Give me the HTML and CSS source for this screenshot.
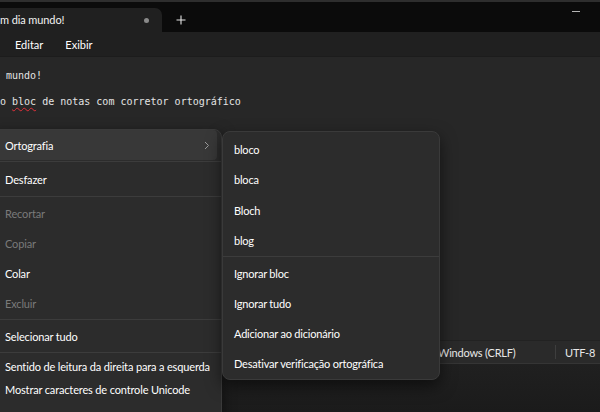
FILE: index.html
```html
<!DOCTYPE html>
<html lang="pt-BR">
<head>
<meta charset="utf-8">
<title>Bloco de notas</title>
<link rel="stylesheet" href="styles.css">
</head>
<body>
<div class="window">
  <div class="topstrip"></div>
  <div class="tabbar">
    <div class="tab">
      <span class="tab-title">m dia mundo!</span>
      <span class="dot"></span>
    </div>
    <div class="newtab">
      <svg width="10" height="10" viewBox="0 0 10 10"><path d="M5 0.5V9.5M0.5 5H9.5" stroke="#e6e6e6" stroke-width="1.1" fill="none"/></svg>
    </div>
    <div class="spacer"></div>
    <div class="minimize"></div>
  </div>
  <div class="menubar">
    <span class="menu-item">Editar</span>
    <span class="menu-item">Exibir</span>
  </div>
  <div class="editor">
    <div class="line"> mundo!</div>
    <div class="line">o <span class="misspelled">bloc</span> de notas com corretor ortográfico</div>
  </div>
  <div class="statusbar">
    <span class="status-item status-eol">Windows (CRLF)</span>
    <span class="status-sep"></span>
    <span class="status-item">UTF-8</span>
  </div>
  <div class="bottom"></div>
</div>

<div class="ctx">
  <div class="row hover h30"><span>Ortografia</span>
    <svg class="chev" width="6" height="9" viewBox="0 0 6 9"><path d="M1 1L4.5 4.5L1 8" stroke="#9a9a9a" stroke-width="1" fill="none"/></svg>
  </div>
  <div class="sep"></div>
  <div class="row h32">Desfazer</div>
  <div class="sep"></div>
  <div class="row h30 disabled">Recortar</div>
  <div class="row h30 disabled">Copiar</div>
  <div class="row h30">Colar</div>
  <div class="row h30 disabled">Excluir</div>
  <div class="sep"></div>
  <div class="row h30">Selecionar tudo</div>
  <div class="sep"></div>
  <div class="row h24">Sentido de leitura da direita para a esquerda</div>
  <div class="row h22">Mostrar caracteres de controle Unicode</div>
</div>

<div class="submenu">
  <div class="row h30">bloco</div>
  <div class="row h31">bloca</div>
  <div class="row h30">Bloch</div>
  <div class="row h30">blog</div>
  <div class="sep"></div>
  <div class="row h30">Ignorar bloc</div>
  <div class="row h30">Ignorar tudo</div>
  <div class="row h30">Adicionar ao dicionário</div>
  <div class="row h30">Desativar verificação ortográfica</div>
</div>
</body>
</html>
```

FILE: styles.css
```css
* { box-sizing: border-box; }
html, body { margin: 0; padding: 0; }
body {
  width: 600px;
  height: 412px;
  overflow: hidden;
  background: #272727;
  font-family: "Lato", "Noto Sans", sans-serif;
  color: #ffffff;
  position: relative;
}
.window {
  display: flex;
  flex-direction: column;
  height: 412px;
}
.topstrip { height: 2px; background: #2e2e2e; }
.tabbar {
  height: 30px;
  background: #0b0b0b;
  display: flex;
  align-items: flex-end;
}
.tab {
  width: 162px;
  height: 24px;
  background: #202020;
  border-top-right-radius: 7px;
  display: flex;
  align-items: center;
  justify-content: space-between;
  padding-right: 13px;
  font-size: 11px;
  letter-spacing: -0.1px;
  color: #f2f2f2;
}
.tab-title { line-height: 24px; }
.dot {
  width: 5px; height: 5px; border-radius: 50%;
  background: #8a8a8a;
}
.newtab {
  width: 38px;
  height: 24px;
  display: flex;
  align-items: center;
  justify-content: center;
}
.spacer { flex: 1; }
.minimize {
  align-self: flex-start;
  margin-top: 9px;
  margin-right: 20px;
  width: 8px;
  height: 1px;
  background: #b4b4b4;
}
.menubar {
  height: 25px;
  background: #202020;
  display: flex;
  align-items: center;
  gap: 22px;
  padding-left: 15px;
  font-size: 11px;
  border-bottom: 1px solid #1c1c1c;
}
.editor {
  flex: 1;
  background: #272727;
  padding-top: 6px;
  font-family: "DejaVu Sans Mono", "Liberation Mono", monospace;
  font-size: 10px;
  color: #e4e4e4;
}
.line {
  height: 26px;
  line-height: 26px;
  white-space: pre;
}
.misspelled {
  text-decoration: underline wavy #e0303a;
  text-decoration-thickness: 1px;
  text-underline-offset: 2px;
  text-decoration-skip-ink: none;
}
.statusbar {
  height: 24px;
  background: #2a2a2a;
  border-top: 1px solid #222;
  border-bottom: 1px solid #353535;
  display: flex;
  align-items: center;
  padding-left: 438px;
  font-size: 11px;
  letter-spacing: -0.2px;
  color: #e8e8e8;
}
.status-eol { width: 117px; }
.status-sep {
  width: 1px; height: 14px;
  background: #3e3e3e;
  margin-right: 9px;
}
.bottom {
  height: 48px;
  background: linear-gradient(#202020, #1b1b1b);
}

.ctx {
  position: absolute;
  left: -10px;
  top: 129px;
  width: 232px;
  height: 300px;
  background: #2c2c2c;
  border: 1px solid #3a3a3a;
  border-radius: 8px;
  box-shadow: 0 4px 14px rgba(0,0,0,0.5);
  font-size: 11px;
  letter-spacing: -0.15px;
}
.row {
  display: flex;
  align-items: center;
  justify-content: space-between;
  margin: 0 4px;
  padding: 0 7px 0 10px;
  border-radius: 4px;
  white-space: nowrap;
  color: #ffffff;
}
.h22 { height: 22px; }
.h24 { height: 24px; }
.h30 { height: 30px; }
.h31 { height: 31px; }
.h32 { height: 32px; }
.hover { background: #383838; }
.disabled { color: #7a7a7a; }
.sep {
  height: 1px;
  margin: 1px 0;
  background: #3c3c3c;
}
.submenu {
  position: absolute;
  left: 222px;
  top: 131px;
  width: 218px;
  height: 249px;
  background: #2c2c2c;
  border: 1px solid #3a3a3a;
  border-radius: 8px;
  box-shadow: 0 6px 16px rgba(0,0,0,0.55);
  padding-top: 2px;
  font-size: 11px;
  letter-spacing: -0.2px;
}
.submenu .row { padding-left: 7px; }
.submenu .h31 { height: 31px; }
```
